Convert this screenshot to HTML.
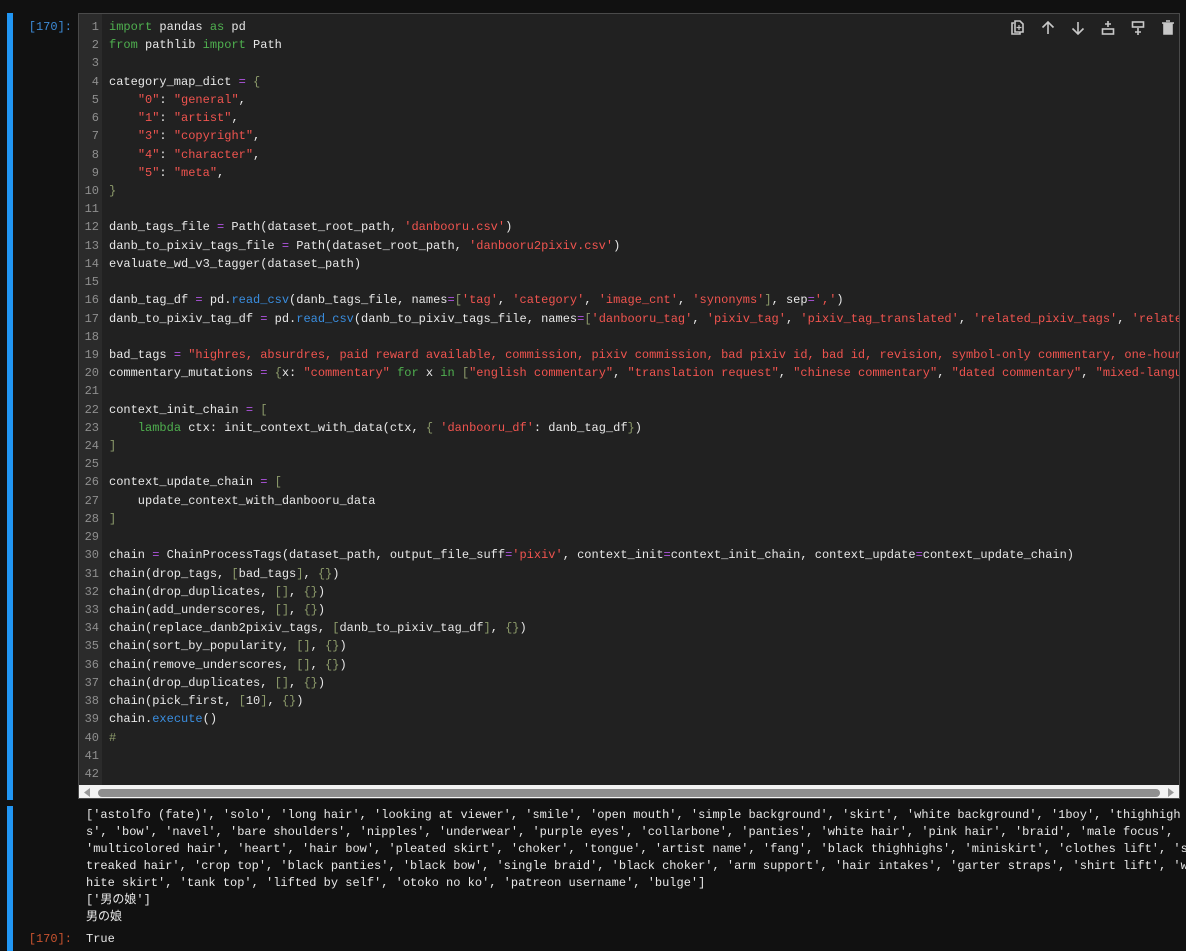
<!DOCTYPE html>
<html><head><meta charset="utf-8"><style>
body{margin:0;background:#111;width:1186px;height:951px;overflow:hidden;position:relative;font-family:"Liberation Mono","Noto Sans CJK JP",monospace}
.bar{position:absolute;left:7px;width:6px;background:#2196f3}
.prompt{position:absolute;font-size:12px;color:#3d8ad6;right:1114px;text-align:right}
.ed{position:absolute;left:78px;top:13px;width:1102px;height:786px;background:#212121;border:1px solid #4a4a4a;box-sizing:border-box;overflow:hidden}
.gut{position:absolute;left:0;top:0;width:23px;height:772px;background:#2b2b2b}
pre{margin:0;font-family:"Liberation Mono","Noto Sans CJK JP",monospace;font-size:12px;white-space:pre}
.ln{position:absolute;left:0;top:4px;width:20px;text-align:right;color:#8f8f8f;line-height:18.22px}
.code{position:absolute;left:30px;top:4px;color:#e8e8e8;line-height:18.22px}
.k{color:#4fb04f}.s{color:#f0544f}.o{color:#b055e0}.b{color:#8c9a6a}.f{color:#3a8ee0}
.sb{position:absolute;left:0;top:771px;width:1100px;height:14px;background:#f3f3f3}
.th{position:absolute;left:19px;top:4px;width:1062px;height:8px;background:#8f8f8f;border-radius:4px}
.icons{position:absolute;top:19px;left:1010px}
.out{position:absolute;left:86px;top:807px;color:#e8e8e8;line-height:17px;font-size:12px}
</style></head><body>
<div class="bar" style="top:13px;height:787px"></div>
<div class="bar" style="top:806px;height:145px"></div>
<div class="prompt" style="top:20px">[170]:</div>
<div class="prompt" style="top:932px;color:#c8532f">[170]:</div>
<div class="ed">
<div class="gut"></div>
<pre class="ln">1
2
3
4
5
6
7
8
9
10
11
12
13
14
15
16
17
18
19
20
21
22
23
24
25
26
27
28
29
30
31
32
33
34
35
36
37
38
39
40
41
42</pre>
<pre class="code"><span class="k">import</span> pandas <span class="k">as</span> pd
<span class="k">from</span> pathlib <span class="k">import</span> Path

category_map_dict <span class="o">=</span> <span class="b">{</span>
    <span class="s">"0"</span>: <span class="s">"general"</span>,
    <span class="s">"1"</span>: <span class="s">"artist"</span>,
    <span class="s">"3"</span>: <span class="s">"copyright"</span>,
    <span class="s">"4"</span>: <span class="s">"character"</span>,
    <span class="s">"5"</span>: <span class="s">"meta"</span>,
<span class="b">}</span>

danb_tags_file <span class="o">=</span> Path(dataset_root_path, <span class="s">'danbooru.csv'</span>)
danb_to_pixiv_tags_file <span class="o">=</span> Path(dataset_root_path, <span class="s">'danbooru2pixiv.csv'</span>)
evaluate_wd_v3_tagger(dataset_path)

danb_tag_df <span class="o">=</span> pd.<span class="f">read_csv</span>(danb_tags_file, names<span class="o">=</span><span class="b">[</span><span class="s">'tag'</span>, <span class="s">'category'</span>, <span class="s">'image_cnt'</span>, <span class="s">'synonyms'</span><span class="b">]</span>, sep<span class="o">=</span><span class="s">','</span>)
danb_to_pixiv_tag_df <span class="o">=</span> pd.<span class="f">read_csv</span>(danb_to_pixiv_tags_file, names<span class="o">=</span><span class="b">[</span><span class="s">'danbooru_tag'</span>, <span class="s">'pixiv_tag'</span>, <span class="s">'pixiv_tag_translated'</span>, <span class="s">'related_pixiv_tags'</span>, <span class="s">'related_pixiv_tags_translated'</span><span class="b">]</span>)

bad_tags <span class="o">=</span> <span class="s">"highres, absurdres, paid reward available, commission, pixiv commission, bad pixiv id, bad id, revision, symbol-only commentary, one-hour drawing challenge"</span>
commentary_mutations <span class="o">=</span> <span class="b">{</span>x: <span class="s">"commentary"</span> <span class="k">for</span> x <span class="k">in</span> <span class="b">[</span><span class="s">"english commentary"</span>, <span class="s">"translation request"</span>, <span class="s">"chinese commentary"</span>, <span class="s">"dated commentary"</span>, <span class="s">"mixed-language commentary"</span><span class="b">]</span><span class="b">}</span>

context_init_chain <span class="o">=</span> <span class="b">[</span>
    <span class="k">lambda</span> ctx: init_context_with_data(ctx, <span class="b">{</span> <span class="s">'danbooru_df'</span>: danb_tag_df<span class="b">}</span>)
<span class="b">]</span>

context_update_chain <span class="o">=</span> <span class="b">[</span>
    update_context_with_danbooru_data
<span class="b">]</span>

chain <span class="o">=</span> ChainProcessTags(dataset_path, output_file_suff<span class="o">=</span><span class="s">'pixiv'</span>, context_init<span class="o">=</span>context_init_chain, context_update<span class="o">=</span>context_update_chain)
chain(drop_tags, <span class="b">[</span>bad_tags<span class="b">]</span>, <span class="b">{}</span>)
chain(drop_duplicates, <span class="b">[]</span>, <span class="b">{}</span>)
chain(add_underscores, <span class="b">[]</span>, <span class="b">{}</span>)
chain(replace_danb2pixiv_tags, <span class="b">[</span>danb_to_pixiv_tag_df<span class="b">]</span>, <span class="b">{}</span>)
chain(sort_by_popularity, <span class="b">[]</span>, <span class="b">{}</span>)
chain(remove_underscores, <span class="b">[]</span>, <span class="b">{}</span>)
chain(drop_duplicates, <span class="b">[]</span>, <span class="b">{}</span>)
chain(pick_first, <span class="b">[</span>10<span class="b">]</span>, <span class="b">{}</span>)
chain.<span class="f">execute</span>()
<span class="b">#</span>
</pre>
<div class="sb"><svg style="position:absolute;left:4px;top:3px" width="8" height="9"><path d="M7 0L1 4.5L7 9Z" fill="#999"/></svg><div class="th"></div><svg style="position:absolute;left:1088px;top:3px" width="8" height="9"><path d="M1 0L7 4.5L1 9Z" fill="#999"/></svg></div>
</div>
<svg class="icons" width="170" height="18" fill="none" stroke="#c8c8c8" stroke-width="1.6">
<path d="M4 4H2V15H10V13M5 2H10L13 5V13H5Z"/><path d="M9 6V11M6.5 8.5H11.5" stroke-width="1.2"/>
<path d="M38 15V3M32.5 8.5L38 3L43.5 8.5"/>
<path d="M68 3V15M62.5 9.5L68 15L73.5 9.5"/>
<path d="M98 2V8M95 5H101"/><rect x="92.5" y="10" width="11" height="5"/>
<rect x="122.5" y="3" width="11" height="5"/><path d="M128 9V16M125 13H131"/>
<path d="M152 4H164M154 4V15H162V4M156 2H160" fill="#c8c8c8"/><rect x="154" y="5" width="8" height="10" fill="#c8c8c8" stroke="none"/>
</svg>
<pre class="out">['astolfo (fate)', 'solo', 'long hair', 'looking at viewer', 'smile', 'open mouth', 'simple background', 'skirt', 'white background', '1boy', 'thighhigh
s', 'bow', 'navel', 'bare shoulders', 'nipples', 'underwear', 'purple eyes', 'collarbone', 'panties', 'white hair', 'pink hair', 'braid', 'male focus',
'multicolored hair', 'heart', 'hair bow', 'pleated skirt', 'choker', 'tongue', 'artist name', 'fang', 'black thighhighs', 'miniskirt', 'clothes lift', 's
treaked hair', 'crop top', 'black panties', 'black bow', 'single braid', 'black choker', 'arm support', 'hair intakes', 'garter straps', 'shirt lift', 'w
hite skirt', 'tank top', 'lifted by self', 'otoko no ko', 'patreon username', 'bulge']
['男の娘']
男の娘</pre>
<pre class="out" style="top:931px">True</pre>
</body></html>
